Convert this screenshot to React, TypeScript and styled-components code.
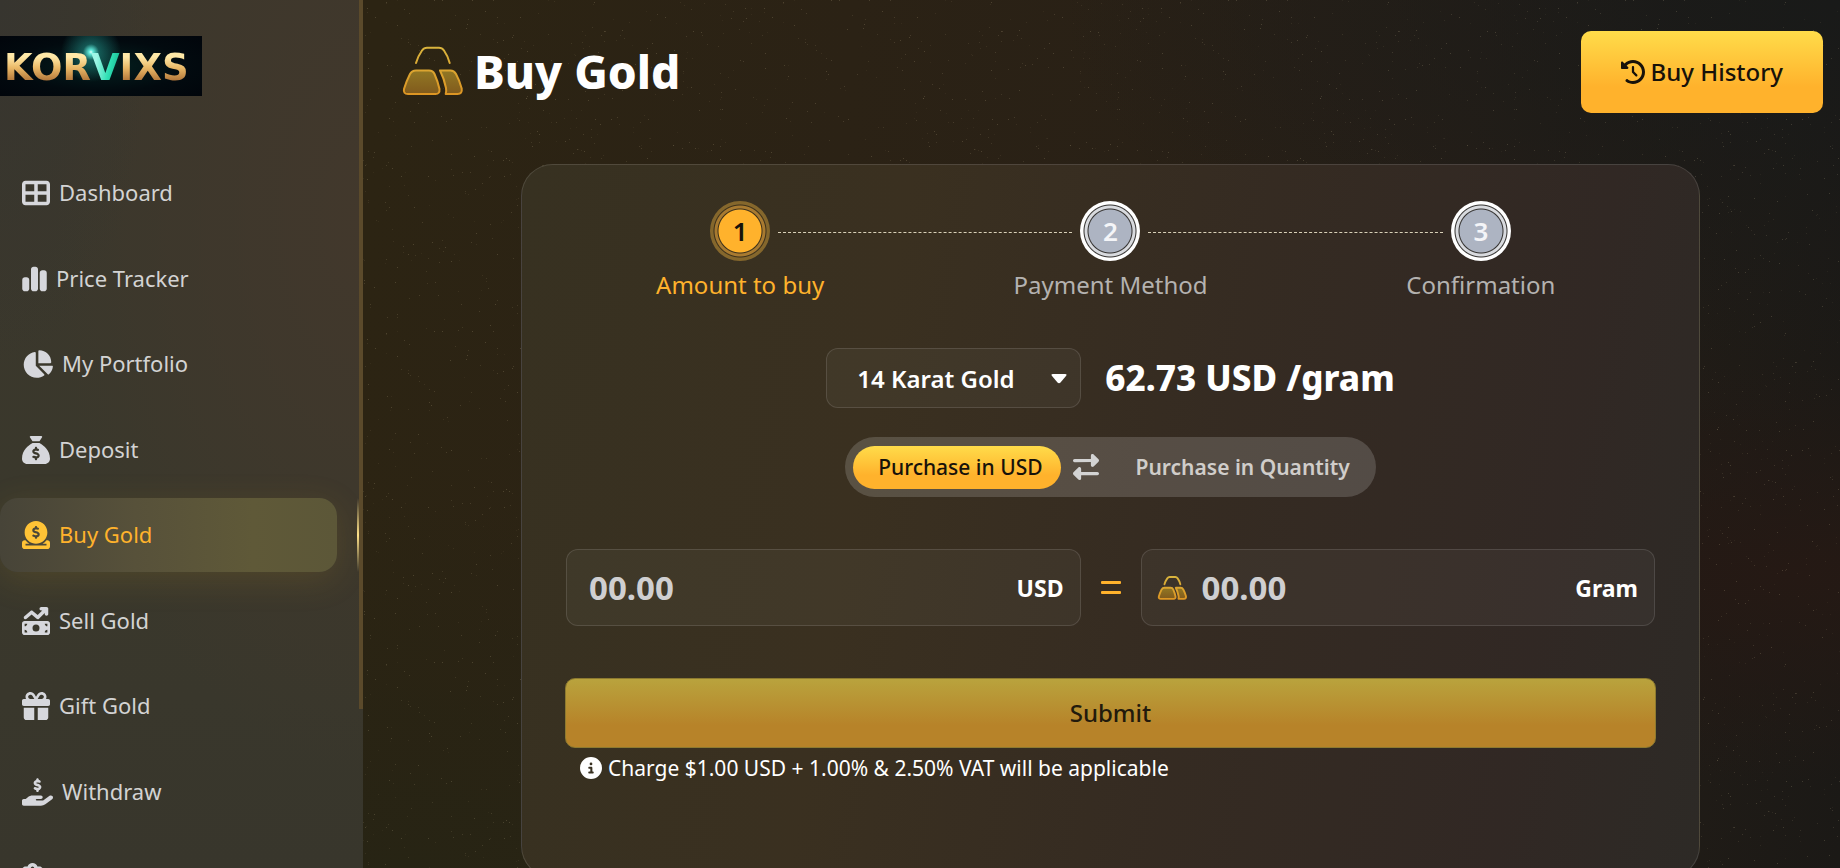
import React, { useState } from "react";
import styled, { createGlobalStyle, css } from "styled-components";
import {
  FaTableCellsLarge,
  FaChartSimple,
  FaChartPie,
  FaSackDollar,
  FaCircleDollarToSlot,
  FaMoneyBillTrendUp,
  FaGift,
  FaHandHoldingDollar,
  FaClipboardList,
  FaClockRotateLeft,
  FaRightLeft,
  FaCircleInfo,
} from "react-icons/fa6";

const gold = "#ffb22c";
const goldGradient = "linear-gradient(180deg, #ffdc4a 0%, #ffb22c 68%, #ffb22c 100%)";

const GlobalStyle = createGlobalStyle`
  *, *::before, *::after { box-sizing: border-box; }
  body {
    margin: 0;
    background: #241d14;
    color: #fff;
    font-family: "Noto Sans", "Open Sans", sans-serif;
    font-size: 22px;
    line-height: 32px;
  }
  button, input, select { font: inherit; color: inherit; }
`;

const Shell = styled.div`
  position: relative;
  display: flex;
  height: 100vh;
  overflow: hidden;
  background:
    radial-gradient(ellipse at 100% 0%, #191a19 0%, rgba(25, 26, 25, 0) 30%),
    radial-gradient(ellipse at 97% 66%, #251914 0%, rgba(37, 25, 20, 0) 26%),
    radial-gradient(ellipse at 22% 100%, #272414 0%, rgba(39, 36, 20, 0) 30%),
    linear-gradient(94deg, #2c2413 20%, #2b2215 45%, #271f17 78%, #1b1916 100%);
`;

const Speckles = styled.svg`
  position: absolute;
  inset: 0;
  width: 100%;
  height: 100%;
  pointer-events: none;
`;

const Sidebar = styled.aside`
  position: relative;
  flex: 0 0 363px;
  padding: 36px 0 0;
  overflow: hidden;
  background:
    radial-gradient(ellipse at 0% 0%, #37352f 0%, rgba(55, 53, 47, 0) 30%),
    radial-gradient(ellipse at 100% 25%, #42382c 0%, rgba(66, 56, 44, 0) 60%),
    linear-gradient(180deg, #3b372c 0%, #3a382c 60%, #38362c 100%);
`;

const ScrollThumb = styled.span`
  position: absolute;
  top: 0;
  right: 0;
  width: 4px;
  height: 709px;
  background: #5b4a2b;
`;

const Logo = styled.a`
  display: flex;
  align-items: center;
  width: 202px;
  height: 60px;
  padding: 3px 0 0 4px;
  text-decoration: none;
  font: 700 37px/40px "DejaVu Sans", sans-serif;
  background:
    radial-gradient(circle at 91px 16px, #e8fffb 0, #5fe9da 2px, rgba(38, 160, 150, 0.5) 8px, rgba(20, 90, 90, 0) 30px),
    radial-gradient(ellipse at 50% 50%, #04201f 0%, #020a0f 60%, #01050b 100%);
`;

const LogoText = styled.span<{ $teal?: boolean }>`
  color: transparent;
  background: ${(p) =>
    p.$teal
      ? "linear-gradient(100deg, #9ff5e6 20%, #2fe0b4 60%, #17b98f 90%)"
      : "linear-gradient(180deg, #ffe9a8 22%, #eab866 50%, #b57a3c 80%)"};
  -webkit-background-clip: text;
  background-clip: text;
`;

const NavList = styled.ul`
  display: flex;
  flex-direction: column;
  justify-content: space-between;
  min-height: 758px;
  margin: 60px 26px 0 0;
  padding: 0;
  list-style: none;
`;

const NavLink = styled.a<{ $active?: boolean; $iconWidth: number }>`
  position: relative;
  display: flex;
  align-items: center;
  gap: 9px;
  height: 74px;
  padding-left: 22px;
  border-radius: 18px;
  color: #d3d3d3;
  text-decoration: none;
  svg { width: ${(p) => p.$iconWidth}px; height: 28px; color: #d6d7dc; }
  ${(p) =>
    p.$active &&
    css`
      color: ${gold};
      background: linear-gradient(90deg, #474438 0%, #57513a 40%, #5f5938 75%, #5c5738 100%);
      box-shadow: 0 8px 34px rgba(190, 150, 40, 0.16);
      svg { color: #ffc336; }
    `}
`;

const NavLabel = styled.span`
  padding-bottom: 2px;
`;

const ActiveMark = styled.span`
  position: absolute;
  top: 0;
  right: -22px;
  width: 2px;
  height: 74px;
  background: linear-gradient(180deg, rgba(255, 190, 60, 0), #ffe28a 50%, rgba(255, 190, 60, 0));
`;

const Main = styled.main`
  position: relative;
  flex: 1;
  min-width: 0;
  padding: 31px 17px 0 35px;
`;

const PageHeader = styled.header`
  display: flex;
  align-items: center;
  justify-content: space-between;
`;

const Title = styled.h1`
  display: flex;
  align-items: center;
  gap: 8px;
  margin: 0;
  padding-bottom: 2px;
  font-size: 46px;
  line-height: 60px;
  font-weight: 800;
`;

const HistoryButton = styled.button`
  display: flex;
  align-items: center;
  gap: 6px;
  height: 82px;
  padding: 0 40px;
  border: 0;
  border-radius: 10px;
  color: #17120a;
  background: ${goldGradient};
  font-size: 24px;
  font-weight: 500;
  cursor: pointer;
`;

const CardArea = styled.section`
  padding: 51px 123px 0;
`;

const Card = styled.div`
  min-height: 714px;
  padding: 36px 33px;
  border: 1px solid rgba(255, 255, 255, 0.12);
  border-radius: 32px;
  background: linear-gradient(100deg, #373121 0%, #3a3020 30%, #352b22 58%, #312824 84%, #2d2a26 100%);
`;

const Steps = styled.ol`
  display: grid;
  grid-template-columns: repeat(3, 1fr);
  margin: 0;
  padding: 0;
  list-style: none;
`;

const Step = styled.li<{ $active?: boolean }>`
  position: relative;
  display: flex;
  flex-direction: column;
  align-items: center;
  gap: 8px;
  font-size: 24px;
  color: ${(p) => (p.$active ? gold : "#b4b2b0")};
  &:not(:last-child)::after {
    content: "";
    position: absolute;
    top: 31px;
    left: calc(50% + 38px);
    right: calc(-50% + 38px);
    border-top: 1px dashed #d8d0b8;
  }
`;

const StepDot = styled.span<{ $active?: boolean }>`
  display: grid;
  place-items: center;
  width: 60px;
  height: 60px;
  border-radius: 50%;
  font-size: 26px;
  font-weight: 600;
  color: ${(p) => (p.$active ? "#17120a" : "#f4f5f8")};
  background: ${(p) =>
    p.$active
      ? `radial-gradient(circle, ${gold} 21px, #3a2f1a 22px, #a87a30 23px, #a87a30 25px, #3a2f1a 26px, #85672c 27px)`
      : "radial-gradient(circle, #adb4c2 21px, #33312f 22px, #d8dade 23px, #d8dade 25px, #33312f 26px, #ffffff 27px)"};
`;

const PriceRow = styled.div`
  display: flex;
  align-items: center;
  justify-content: center;
  gap: 24px;
  margin-top: 47px;
`;

const SelectWrap = styled.div`
  position: relative;
  svg { position: absolute; top: 26px; right: 14px; pointer-events: none; }
`;

const fieldLook = css`
  border: 1px solid rgba(255, 255, 255, 0.12);
  border-radius: 12px;
  background: rgba(255, 255, 255, 0.04);
`;

const KaratSelect = styled.select`
  ${fieldLook}
  appearance: none;
  display: block;
  width: 255px;
  height: 60px;
  padding: 2px 30px 0;
  font-size: 24px;
  font-weight: 600;
  option { color: #222; }
`;

const Price = styled.strong`
  font-size: 35px;
  line-height: 44px;
  font-weight: 800;
`;

const Toggle = styled.div`
  display: flex;
  align-items: center;
  width: fit-content;
  height: 60px;
  margin: 29px auto 0;
  padding: 0 8px;
  border-radius: 30px;
  background: rgba(255, 255, 255, 0.16);
  svg { width: 26px; height: 28px; margin: 0 12px; color: #d3d3d3; }
`;

const ToggleButton = styled.button<{ $on: boolean }>`
  height: 43px;
  padding: 0 18px 0 25px;
  border: 0;
  border-radius: 22px;
  font-size: 21px;
  font-weight: ${(p) => (p.$on ? 500 : 600)};
  color: ${(p) => (p.$on ? "#17120a" : "#d0cdca")};
  background: ${(p) => (p.$on ? goldGradient : "transparent")};
  cursor: pointer;
`;

const Form = styled.form`
  margin-top: 52px;
  padding: 0 10px;
`;

const Amounts = styled.div`
  display: grid;
  grid-template-columns: 1fr 60px 1fr;
  align-items: center;
  padding: 0 1px;
`;

const Field = styled.label`
  ${fieldLook}
  display: flex;
  align-items: center;
  gap: 14px;
  min-width: 0;
  height: 77px;
  padding: 0 16px 0 14px;
  font-weight: 700;
  font-size: 23px;
`;

const AmountInput = styled.input<{ $inset?: boolean }>`
  flex: 1;
  min-width: 0;
  padding: 0 0 0 ${(p) => (p.$inset ? "8px" : "0")};
  border: 0;
  outline: 0;
  background: none;
  font-size: 33px;
  line-height: 44px;
  &::placeholder { color: #cfcfd1; opacity: 1; }
`;

const Equals = styled.span`
  display: grid;
  justify-content: center;
  gap: 7px;
  &::before, &::after {
    content: "";
    width: 20px;
    height: 3px;
    border-radius: 1px;
    background: ${gold};
  }
`;

const SubmitButton = styled.button`
  width: 100%;
  height: 70px;
  margin-top: 52px;
  border: 1px solid #8d7a30;
  border-radius: 10px;
  color: #221a0c;
  background: linear-gradient(180deg, #b9a33d 0%, #b78329 68%, #b78329 100%);
  font-size: 24px;
  font-weight: 500;
`;

const Notice = styled.p`
  display: flex;
  align-items: center;
  gap: 6px;
  margin: 4px 15px 0;
  font-size: 21px;
  svg { width: 22px; height: 22px; }
`;

function GoldBars({ size, id, stroke }: { size: number; id: string; stroke: number }) {
  return (
    <svg width={size} height={size} viewBox="0 0 68 68" fill="none" aria-hidden="true">
      <defs>
        <linearGradient id={id + "s"} x1="0" y1="8" x2="0" y2="60" gradientUnits="userSpaceOnUse">
          <stop offset="0" stopColor="#d9b53e" />
          <stop offset="1" stopColor="#dd9422" />
        </linearGradient>
        <linearGradient id={id + "f"} x1="0" y1="34" x2="0" y2="58" gradientUnits="userSpaceOnUse">
          <stop offset="0" stopColor="#917724" />
          <stop offset="1" stopColor="#80591c" />
        </linearGradient>
      </defs>
      <g stroke={`url(#${id}s)`} strokeWidth={stroke} strokeLinecap="round" strokeLinejoin="round">
        <path d="M18 26C19.500 21 21.500 17 24 13.500Q26 10.700 29 10.700H41Q44 10.700 46 13.500C48.500 17 50.300 21 51.700 26" />
        <path
          d="M18 33.500H31Q35 33.500 36.500 37C38.500 41.500 40.500 47 41.500 52Q42 57 37.500 57H10Q5 57 6 52C7.500 47 9.500 42 12 37Q14 33.500 18 33.500Z"
          fill={`url(#${id}f)`}
        />
        <path
          d="M42 33.500H52.500Q56 33.500 58 37C60.500 41.500 62.500 47 63.700 51.500Q64.500 57 59.500 57H47.700Q48.600 54.500 48 51C46.800 45 44.800 39 42 33.500Z"
          fill={`url(#${id}f)`}
        />
      </g>
    </svg>
  );
}

const navItems = [
  { label: "Dashboard", Icon: FaTableCellsLarge, width: 28 },
  { label: "Price Tracker", Icon: FaChartSimple, width: 25 },
  { label: "My Portfolio", Icon: FaChartPie, width: 31 },
  { label: "Deposit", Icon: FaSackDollar, width: 28 },
  { label: "Buy Gold", Icon: FaCircleDollarToSlot, width: 28 },
  { label: "Sell Gold", Icon: FaMoneyBillTrendUp, width: 28 },
  { label: "Gift Gold", Icon: FaGift, width: 28 },
  { label: "Withdraw", Icon: FaHandHoldingDollar, width: 31 },
  { label: "Transactions", Icon: FaClipboardList, width: 21 },
];

const steps = ["Amount to buy", "Payment Method", "Confirmation"];

const specks = Array.from({ length: 620 }, (_, i) => {
  const a = Math.sin(i * 12.9898) * 43758.5453;
  const b = Math.sin(i * 78.233) * 12543.123;
  return {
    x: Math.floor((a - Math.floor(a)) * 397),
    y: Math.floor((b - Math.floor(b)) * 331),
    o: 0.05 + (i % 5) * 0.03,
  };
});

export default function App() {
  const [mode, setMode] = useState<"usd" | "qty">("usd");
  return (
    <>
      <GlobalStyle />
      <Shell>
        <Speckles aria-hidden="true">
          <defs>
            <pattern id="dust" width="397" height="331" patternUnits="userSpaceOnUse">
              {specks.map((s, i) => (
                <rect key={i} x={s.x} y={s.y} width="1" height="1" fill="#e9d9a8" opacity={s.o} />
              ))}
            </pattern>
          </defs>
          <rect width="100%" height="100%" fill="url(#dust)" />
        </Speckles>
        <Sidebar>
          <Logo href="#" aria-label="Korvixs home">
            <LogoText>KOR</LogoText>
            <LogoText $teal>V</LogoText>
            <LogoText>IXS</LogoText>
          </Logo>
          <nav>
            <NavList>
              {navItems.map(({ label, Icon, width }) => {
                const active = label === "Buy Gold";
                return (
                  <li key={label}>
                    <NavLink href="#" $active={active} $iconWidth={width} aria-current={active ? "page" : undefined}>
                      <Icon aria-hidden="true" />
                      <NavLabel>{label}</NavLabel>
                      {active && <ActiveMark />}
                    </NavLink>
                  </li>
                );
              })}
            </NavList>
          </nav>
          <ScrollThumb />
        </Sidebar>
        <Main>
          <PageHeader>
            <Title>
              <GoldBars size={68} id="title" stroke={2} />
              Buy Gold
            </Title>
            <HistoryButton type="button">
              <FaClockRotateLeft aria-hidden="true" />
              Buy History
            </HistoryButton>
          </PageHeader>
          <CardArea>
            <Card>
              <Steps>
                {steps.map((label, i) => (
                  <Step key={label} $active={i === 0}>
                    <StepDot $active={i === 0}>{i + 1}</StepDot>
                    {label}
                  </Step>
                ))}
              </Steps>
              <PriceRow>
                <SelectWrap>
                  <KaratSelect aria-label="Gold purity">
                    <option>14 Karat Gold</option>
                  </KaratSelect>
                  <svg width="16" height="10" viewBox="0 0 16 10" fill="#fff" aria-hidden="true">
                    <path d="M2 0h12q2.500 0 1 2L9.500 8.500Q8 10 6.500 8.500L1 2Q-.5 0 2 0z" />
                  </svg>
                </SelectWrap>
                <Price>62.73 USD /gram</Price>
              </PriceRow>
              <Toggle role="group" aria-label="Purchase mode">
                <ToggleButton type="button" $on={mode === "usd"} aria-pressed={mode === "usd"} onClick={() => setMode("usd")}>
                  Purchase in USD
                </ToggleButton>
                <FaRightLeft aria-hidden="true" />
                <ToggleButton type="button" $on={mode === "qty"} aria-pressed={mode === "qty"} onClick={() => setMode("qty")}>
                  Purchase in Quantity
                </ToggleButton>
              </Toggle>
              <Form onSubmit={(e) => e.preventDefault()}>
                <Amounts>
                  <Field>
                    <AmountInput $inset placeholder="00.00" inputMode="decimal" />
                    USD
                  </Field>
                  <Equals aria-hidden="true" />
                  <Field>
                    <GoldBars size={32} id="field" stroke={4} />
                    <AmountInput placeholder="00.00" inputMode="decimal" />
                    Gram
                  </Field>
                </Amounts>
                <SubmitButton type="submit">Submit</SubmitButton>
                <Notice>
                  <FaCircleInfo aria-hidden="true" />
                  Charge $1.00 USD + 1.00% &amp; 2.50% VAT will be applicable
                </Notice>
              </Form>
            </Card>
          </CardArea>
        </Main>
      </Shell>
    </>
  );
}
